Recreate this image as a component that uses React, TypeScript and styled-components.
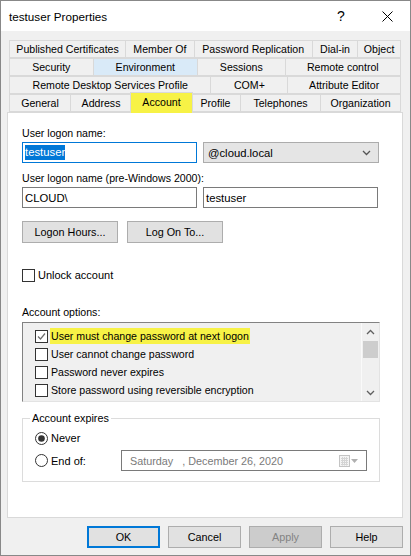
import React from 'react';
import styled, { createGlobalStyle } from 'styled-components';

const GlobalStyle = createGlobalStyle`
  html, body {
    margin: 0;
    padding: 0;
    background: #f0f0f0;
  }
  body {
    font-family: "Liberation Sans", Arial, sans-serif;
    font-size: 10.6px;
    color: #000;
  }
`;

const Window = styled.div`
  width: 411px;
  height: 556px;
  box-sizing: border-box;
  border: 1px solid #888;
  background: #f0f0f0;
  display: flex;
  flex-direction: column;
`;

const TitleBar = styled.div`
  height: 30px;
  flex-shrink: 0;
  background: #fff;
  display: flex;
  align-items: center;
`;

const Title = styled.div`
  flex: 1;
  padding-left: 8px;
  font-size: 11.7px;
`;

const TitleButton = styled.div`
  width: 46px;
  height: 30px;
  display: flex;
  align-items: center;
  justify-content: center;
  font-size: 14px;
`;

const Body = styled.div`
  flex: 1;
  padding: 9px 7px 0 6px;
  display: flex;
  flex-direction: column;
`;

const TabStrip = styled.div`
  padding: 0 2px;
  display: flex;
  flex-direction: column;
`;

const TabRow = styled.div`
  display: flex;
  height: 18px;
`;

const Tab = styled.div<{ $w: number; $bg?: string; $selected?: boolean }>`
  flex: ${({ $w }) => $w} 1 0;
  box-sizing: border-box;
  height: ${({ $selected }) => ($selected ? '21px' : '18px')};
  margin: ${({ $selected }) => ($selected ? '-2px -2px -1px' : '0 0 0 -1px')};
  padding-bottom: ${({ $selected }) => ($selected ? '2px' : '0')};
  position: relative;
  z-index: ${({ $selected }) => ($selected ? 1 : 0)};
  border: 1px solid #d9d9d9;
  border-bottom: ${({ $selected }) => ($selected ? 'none' : '1px solid #d9d9d9')};
  background: ${({ $bg }) => $bg || '#f0f0f0'};
  display: flex;
  align-items: center;
  justify-content: center;
  white-space: nowrap;
  &:first-child {
    margin-left: ${({ $selected }) => ($selected ? '-2px' : '0')};
  }
`;

const Panel = styled.div`
  height: 406px;
  box-sizing: border-box;
  background: #fff;
  border: 1px solid #d9d9d9;
  padding: 13px 22px 0 14px;
  display: flex;
  flex-direction: column;
`;

const Label = styled.div<{ $mt?: number }>`
  line-height: 14px;
  margin-top: ${({ $mt }) => $mt || 0}px;
`;

const FieldRow = styled.div<{ $mt?: number }>`
  display: flex;
  gap: 6px;
  margin-top: ${({ $mt }) => $mt || 0}px;
`;

const TextBox = styled.div<{ $focused?: boolean }>`
  width: 175px;
  height: 21px;
  box-sizing: border-box;
  border: 1px solid ${({ $focused }) => ($focused ? '#0078d7' : '#7a7a7a')};
  background: #fff;
  display: flex;
  align-items: center;
  padding-left: 2px;
  font-size: 11.3px;
`;

const Selected = styled.span`
  background: #0078d7;
  color: #fff;
  padding: 1px 0;
  line-height: 13px;
`;

const ComboBox = styled.div`
  width: 176px;
  height: 21px;
  box-sizing: border-box;
  border: 1px solid #acacac;
  background: #e5e5e5;
  display: flex;
  align-items: center;
  justify-content: space-between;
  padding: 0 7px 0 4px;
  font-size: 11.3px;
`;

const ButtonRow = styled.div<{ $mt?: number; $end?: boolean }>`
  display: flex;
  gap: ${({ $end }) => ($end ? 8 : 9)}px;
  justify-content: ${({ $end }) => ($end ? 'flex-end' : 'flex-start')};
  margin-top: ${({ $mt }) => $mt || 0}px;
`;

const Button = styled.div<{ $w: number; $default?: boolean; $disabled?: boolean }>`
  width: ${({ $w }) => $w}px;
  height: 22px;
  box-sizing: border-box;
  border: ${({ $default }) => ($default ? '2px solid #0078d7' : '1px solid #adadad')};
  background: ${({ $disabled }) => ($disabled ? '#cccccc' : '#e1e1e1')};
  color: ${({ $disabled }) => ($disabled ? '#838383' : '#000')};
  display: flex;
  align-items: center;
  justify-content: center;
  font-size: 10.8px;
`;

const CheckRow = styled.div<{ $mt?: number }>`
  display: flex;
  align-items: center;
  height: 14px;
  margin-top: ${({ $mt }) => $mt || 0}px;
  gap: 3px;
  font-size: 11px;
`;

const Box = styled.div`
  width: 13px;
  height: 13px;
  box-sizing: border-box;
  border: 1px solid #333;
  background: #fff;
  flex-shrink: 0;
  display: flex;
  align-items: center;
  justify-content: center;
`;

const ListBox = styled.div`
  margin-top: 3px;
  height: 80px;
  box-sizing: border-box;
  border: 1px solid #e3e3e3;
  border-top-color: #828282;
  border-left-color: #828282;
  background: #f0f0f0;
  display: flex;
`;

const ListItems = styled.div`
  flex: 1;
  padding: 4px 0 0 12px;
  display: flex;
  flex-direction: column;
`;

const ListItem = styled.div`
  height: 18px;
  display: flex;
  align-items: center;
  gap: 2px;
  font-size: 10.6px;
`;

const ItemText = styled.span<{ $hl?: boolean }>`
  background: ${({ $hl }) => ($hl ? '#f7f246' : 'transparent')};
  padding: 2px 1px;
  line-height: 12px;
`;

const ScrollBar = styled.div`
  width: 17px;
  border-left: 1px solid #fafafa;
  display: flex;
  flex-direction: column;
  align-items: center;
`;

const ScrollArrow = styled.div`
  height: 17px;
  width: 100%;
  display: flex;
  align-items: center;
  justify-content: center;
`;

const ScrollThumb = styled.div`
  width: 15px;
  height: 17px;
  background: #cdcdcd;
  margin-top: 1px;
`;

const ScrollTrack = styled.div`
  flex: 1;
`;

const Group = styled.div`
  position: relative;
  margin-top: 16px;
  height: 64px;
  box-sizing: border-box;
  border: 1px solid #dcdcdc;
  padding: 12px 0 0 12px;
  display: flex;
  flex-direction: column;
`;

const GroupLabel = styled.div`
  position: absolute;
  top: -8px;
  left: 7px;
  padding: 0 2px;
  background: #fff;
  line-height: 14px;
  font-size: 10.8px;
`;

const RadioRow = styled.div<{ $mt?: number }>`
  display: flex;
  align-items: center;
  margin-top: ${({ $mt }) => $mt || 0}px;
  font-size: 11px;
`;

const RadioOption = styled.div<{ $w?: number }>`
  display: flex;
  align-items: center;
  gap: 3px;
  height: 14px;
  width: ${({ $w }) => ($w ? `${$w}px` : 'auto')};
`;

const DateBox = styled.div`
  width: 246px;
  height: 21px;
  box-sizing: border-box;
  border: 1px solid #7a7a7a;
  background: #fff;
  display: flex;
  align-items: center;
  justify-content: space-between;
  padding: 0 8px 0 8px;
  color: #7a7a7a;
  font-size: 10.8px;
`;

const DateText = styled.span`
  white-space: pre;
`;

const DateIcon = styled.div`
  display: flex;
  align-items: center;
  gap: 1px;
`;

const Footer = styled.div`
  margin-top: 8px;
`;

function CheckBox({ checked }: { checked?: boolean }) {
  return (
    <Box>
      {checked && (
        <svg width="11" height="11" viewBox="0 0 11 11">
          <polyline points="2,5.5 4.5,8 9,2.5" fill="none" stroke="#6d6d6d" strokeWidth="1.2" />
        </svg>
      )}
    </Box>
  );
}

function Radio({ checked }: { checked?: boolean }) {
  return (
    <svg width="13" height="13" viewBox="0 0 13 13">
      <circle cx="6.5" cy="6.5" r="6" fill="#fff" stroke="#333" strokeWidth="1" />
      {checked && <circle cx="6.5" cy="6.5" r="3.3" fill="#333" />}
    </svg>
  );
}

function Chevron({ up, color = '#555' }: { up?: boolean; color?: string }) {
  return (
    <svg width="9" height="6" viewBox="0 0 9 6">
      <polyline
        points={up ? '1,5 4.5,1.5 8,5' : '1,1 4.5,4.5 8,1'}
        fill="none"
        stroke={color}
        strokeWidth="1.3"
      />
    </svg>
  );
}

const rows: { label: string; w: number; bg?: string; selected?: boolean }[][] = [
  [
    { label: 'Published Certificates', w: 116 },
    { label: 'Member Of', w: 68 },
    { label: 'Password Replication', w: 118 },
    { label: 'Dial-in', w: 45 },
    { label: 'Object', w: 42 },
  ],
  [
    { label: 'Security', w: 83 },
    { label: 'Environment', w: 104, bg: '#d9eaf8' },
    { label: 'Sessions', w: 87 },
    { label: 'Remote control', w: 115 },
  ],
  [
    { label: 'Remote Desktop Services Profile', w: 201 },
    { label: 'COM+', w: 76 },
    { label: 'Attribute Editor', w: 112 },
  ],
  [
    { label: 'General', w: 60 },
    { label: 'Address', w: 60 },
    { label: 'Account', w: 61, bg: '#f7f246', selected: true },
    { label: 'Profile', w: 49 },
    { label: 'Telephones', w: 79 },
    { label: 'Organization', w: 79 },
  ],
];

const options = [
  { label: 'User must change password at next logon', checked: true, hl: true },
  { label: 'User cannot change password' },
  { label: 'Password never expires' },
  { label: 'Store password using reversible encryption' },
];

export default function App() {
  return (
    <>
      <GlobalStyle />
      <Window>
        <TitleBar>
          <Title>testuser Properties</Title>
          <TitleButton>?</TitleButton>
          <TitleButton>
            <svg width="11" height="11" viewBox="0 0 11 11">
              <path d="M0.5 0.5 L10.5 10.5 M10.5 0.5 L0.5 10.5" stroke="#000" strokeWidth="1" />
            </svg>
          </TitleButton>
        </TitleBar>
        <Body>
          <TabStrip>
            {rows.map((row, i) => (
              <TabRow key={i}>
                {row.map((t) => (
                  <Tab key={t.label} $w={t.w} $bg={t.bg} $selected={t.selected}>
                    {t.label}
                  </Tab>
                ))}
              </TabRow>
            ))}
          </TabStrip>
          <Panel>
            <Label>User logon name:</Label>
            <FieldRow $mt={2}>
              <TextBox $focused>
                <Selected>testuser</Selected>
              </TextBox>
              <ComboBox>
                <span>@cloud.local</span>
                <Chevron />
              </ComboBox>
            </FieldRow>
            <Label $mt={8}>User logon name (pre-Windows 2000):</Label>
            <FieldRow $mt={2}>
              <TextBox>CLOUD\</TextBox>
              <TextBox>testuser</TextBox>
            </FieldRow>
            <ButtonRow $mt={13}>
              <Button $w={96}>Logon Hours...</Button>
              <Button $w={96}>Log On To...</Button>
            </ButtonRow>
            <CheckRow $mt={25}>
              <CheckBox />
              <span>Unlock account</span>
            </CheckRow>
            <Label $mt={23}>Account options:</Label>
            <ListBox>
              <ListItems>
                {options.map((o) => (
                  <ListItem key={o.label}>
                    <CheckBox checked={o.checked} />
                    <ItemText $hl={o.hl}>{o.label}</ItemText>
                  </ListItem>
                ))}
              </ListItems>
              <ScrollBar>
                <ScrollArrow>
                  <Chevron up color="#606060" />
                </ScrollArrow>
                <ScrollThumb />
                <ScrollTrack />
                <ScrollArrow>
                  <Chevron color="#606060" />
                </ScrollArrow>
              </ScrollBar>
            </ListBox>
            <Group>
              <GroupLabel>Account expires</GroupLabel>
              <RadioRow>
                <RadioOption>
                  <Radio checked />
                  <span>Never</span>
                </RadioOption>
              </RadioRow>
              <RadioRow $mt={5}>
                <RadioOption $w={86}>
                  <Radio />
                  <span>End of:</span>
                </RadioOption>
                <DateBox>
                  <DateText>Saturday   , December 26, 2020</DateText>
                  <DateIcon>
                    <svg width="11" height="12" viewBox="0 0 11 12">
                      <rect x="0.5" y="0.5" width="10" height="11" fill="#f4f4f4" stroke="#c4c4c4" />
                      <path
                        d="M2 3.5 H9 M2 5.5 H9 M2 7.5 H9 M2 9.5 H9 M3.5 2 V10.5 M5.5 2 V10.5 M7.5 2 V10.5"
                        stroke="#d4d4d4"
                        strokeWidth="1"
                      />
                    </svg>
                    <svg width="7" height="4" viewBox="0 0 7 4">
                      <polygon points="0,0 7,0 3.5,4" fill="#b0b0b0" />
                    </svg>
                  </DateIcon>
                </DateBox>
              </RadioRow>
            </Group>
          </Panel>
          <Footer>
            <ButtonRow $end>
              <Button $w={73} $default>OK</Button>
              <Button $w={73}>Cancel</Button>
              <Button $w={73} $disabled>Apply</Button>
              <Button $w={73}>Help</Button>
            </ButtonRow>
          </Footer>
        </Body>
      </Window>
    </>
  );
}
